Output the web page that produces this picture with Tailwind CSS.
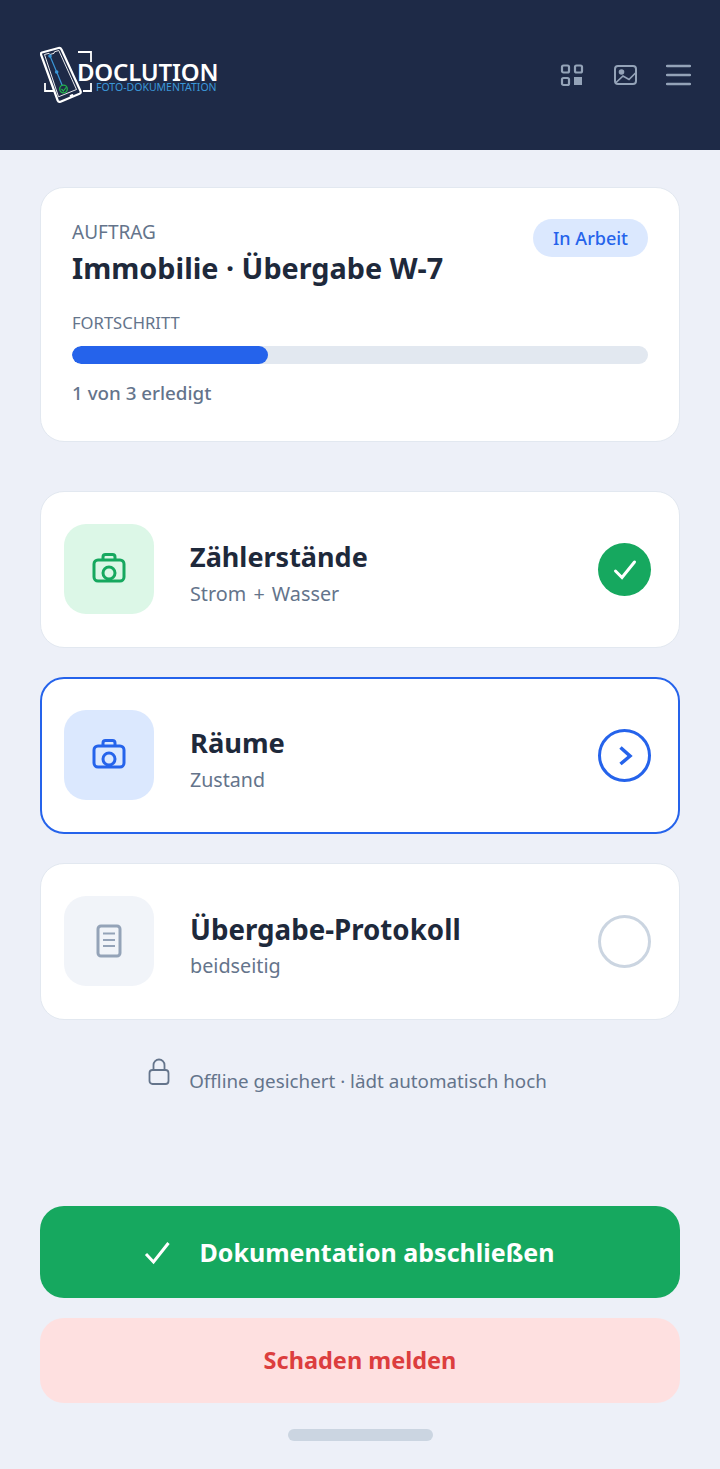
<!doctype html>
<html lang="de"><head><meta charset="utf-8"><script src="https://cdn.jsdelivr.net/npm/@tailwindcss/browser@4"></script></head>
<body class="m-0">
<div class="w-[720px] h-[1469px] overflow-hidden flex flex-col bg-[#edf0f8] font-['Noto_Sans',sans-serif]">
  <header class="h-[150px] shrink-0 bg-[#1e2a47] flex items-center justify-between pl-[40px] pr-[29px]">
    <div class="flex items-start relative w-[178px] h-[60px]">
      <svg width="60" height="62" viewBox="0 0 60 62" fill="none" class="absolute left-0 top-0">
        <path d="M38 7 H51 V17 M43 46 H51 V38 M5 38 V46 H17" stroke="#fff" stroke-width="1.800"/>
        <path d="M2 7.500 L18.500 3 Q20.500 2.500 21.500 4.500 L40.500 46 Q41.300 48 39.500 48.800 L20.500 56.700 Q18.500 57.400 17.700 55.500 L1 9.500 Q0.500 8 2 7.500 Z" fill="#1e2a47" stroke="#fff" stroke-width="2.200" stroke-linejoin="round"/>
        <path d="M4.500 9.500 L9 8.300 L10 9.500 L14 8.300 L14.500 6.800 L18.800 5.500 L36.500 44.500 L18.500 51.800 Z" stroke="#fff" stroke-width="0.900" stroke-linejoin="round"/>
        <path d="M10 11 L16.700 27 L23.300 43" stroke="#3b97d8" stroke-width="1.200"/>
        <circle cx="10" cy="11" r="1.800" fill="#3b97d8"/><circle cx="16.700" cy="27" r="1.800" fill="#3b97d8"/>
        <circle cx="23.500" cy="44" r="3.800" fill="#1e2a47" stroke="#22b14c" stroke-width="1.300"/>
        <path d="M21.500 44 L23.300 46 L26.500 42" stroke="#22b14c" stroke-width="1.200"/>
        <ellipse cx="31.500" cy="50.500" rx="2" ry="1.200" fill="#fff" transform="rotate(-22 31.500 50.500)"/>
      </svg>
      <div class="absolute left-[37px] top-[17px] text-white font-semibold text-[24px] leading-[20px] tracking-[-0.2px] whitespace-nowrap">DOCLUTION</div>
      <div class="absolute left-[56px] top-[37px] text-[#3b97d8] text-[10.500px] leading-[10px] whitespace-nowrap">FOTO-DOKUMENTATION</div>
    </div>
    <div class="flex items-center gap-[29px]">
      <svg width="24" height="24" viewBox="0 0 24 24" fill="none" stroke="#94a3b8" stroke-width="2.200"><rect x="2" y="2.500" width="7" height="7" rx="1.500"/><rect x="15" y="2.500" width="7" height="7" rx="1.500"/><rect x="2" y="15" width="7" height="7" rx="1.500"/><rect x="14" y="14" width="8" height="8" fill="#94a3b8" stroke="none"/></svg>
      <svg width="24" height="24" viewBox="0 0 24 24" fill="none" stroke="#94a3b8" stroke-width="2"><rect x="2" y="3" width="21" height="18" rx="3"/><circle cx="8.500" cy="9" r="2.800" fill="#94a3b8" stroke="none"/><path d="M2.500 20 L10 13 L16 16.500 L22.500 10" stroke-width="1.700"/></svg>
      <svg width="25" height="24" viewBox="0 0 25 24" fill="none" stroke="#94a3b8" stroke-width="2.500" stroke-linecap="round"><path d="M1 3h23M1 12h23M1 21h23"/></svg>
    </div>
  </header>

  <main class="flex-1 flex flex-col px-[40px] pt-[37px] pb-[27px]">
    <section class="relative h-[255px] bg-white rounded-[24px] border border-[#e2e8f0] px-[31px] pt-[31px]">
      <span class="absolute right-[31px] top-[31px] h-[38px] w-[115px] rounded-full bg-[#dbe8fe] text-[#2563eb] text-[18px] font-medium flex items-center justify-center">In Arbeit</span>
      <div class="text-[19px] leading-[26px] text-[#64748b]">AUFTRAG</div>
      <div class="text-[28.800px] leading-[36px] font-bold text-[#1e293b] mt-[5px]">Immobilie · Übergabe W-7</div>
      <div class="text-[16.600px] leading-[22px] text-[#64748b] mt-[26px]">FORTSCHRITT</div>
      <div class="h-[18px] rounded-full bg-[#e2e8f0] mt-[12px] overflow-hidden"><div class="h-full w-[34%] rounded-full bg-[#2563eb]"></div></div>
      <div class="text-[18.800px] leading-[26px] font-medium text-[#64748b] mt-[16px]">1 von 3 erledigt</div>
    </section>

    <div class="flex flex-col gap-[29px] mt-[49px]">
      <article class="h-[157px] bg-white rounded-[24px] border border-[#e2e8f0] flex items-center pl-[23px] pr-[28px]">
        <div class="w-[90px] h-[90px] mb-[2px] rounded-[22px] bg-[#dcf7e7] flex items-center justify-center">
          <svg width="36" height="36" viewBox="0 0 36 36" fill="none" stroke="#16a85f" stroke-width="3"><rect x="3" y="9" width="30" height="21" rx="4"/><path d="M12 9 V6 Q12 3.500 14.500 3.500 H21.500 Q24 3.500 24 6 V9"/><circle cx="18" cy="22" r="6"/></svg>
        </div>
        <div class="ml-[36px] flex-1 pt-[7px]">
          <div class="text-[27px] leading-[36px] font-bold text-[#1e293b]">Zählerstände</div>
          <div class="text-[19.800px] leading-[28px] text-[#64748b] mt-[5px] [word-spacing:2px]">Strom + Wasser</div>
        </div>
        <div class="w-[53px] h-[53px] rounded-full bg-[#16a85f] flex items-center justify-center">
          <svg width="26" height="26" viewBox="0 0 26 26" fill="none" stroke="#fff" stroke-width="3" stroke-linecap="round"><path d="M3.500 14 L10 20.500 L22.500 5"/></svg>
        </div>
      </article>

      <article class="h-[157px] bg-white rounded-[24px] border-2 border-[#2563eb] flex items-center pl-[22px] pr-[27px]">
        <div class="w-[90px] h-[90px] mb-[2px] rounded-[22px] bg-[#dbe8fe] flex items-center justify-center">
          <svg width="36" height="36" viewBox="0 0 36 36" fill="none" stroke="#2563eb" stroke-width="3"><rect x="3" y="9" width="30" height="21" rx="4"/><path d="M12 9 V6 Q12 3.500 14.500 3.500 H21.500 Q24 3.500 24 6 V9"/><circle cx="18" cy="22" r="6"/></svg>
        </div>
        <div class="ml-[36px] flex-1 pt-[7px]">
          <div class="text-[27.300px] leading-[36px] font-bold text-[#1e293b]">Räume</div>
          <div class="text-[19.600px] leading-[28px] text-[#64748b] mt-[5px]">Zustand</div>
        </div>
        <div class="w-[53px] h-[53px] rounded-full border-[3px] border-[#2563eb] flex items-center justify-center">
          <svg width="20" height="20" viewBox="0 0 20 20" fill="none" stroke="#2563eb" stroke-width="3.500"><path d="M5.500 1.500 L15 10 L5.500 18"/></svg>
        </div>
      </article>

      <article class="h-[157px] bg-white rounded-[24px] border border-[#e2e8f0] flex items-center pl-[23px] pr-[28px]">
        <div class="w-[90px] h-[90px] mb-[2px] rounded-[22px] bg-[#f1f4f9] flex items-center justify-center">
          <svg width="36" height="36" viewBox="0 0 36 36" fill="none" stroke="#94a3b8" stroke-width="3"><rect x="7" y="3" width="22" height="30" rx="3"/><path d="M12 10.500 H24 M12 17 H24 M12 23 H24" stroke-width="2"/></svg>
        </div>
        <div class="ml-[36px] flex-1 pt-[7px]">
          <div class="text-[27.700px] leading-[36px] font-bold text-[#1e293b]">Übergabe-Protokoll</div>
          <div class="text-[19.800px] leading-[28px] text-[#64748b] mt-[5px]">beidseitig</div>
        </div>
        <div class="w-[53px] h-[53px] rounded-full border-[3px] border-[#cbd5e1]"></div>
      </article>
    </div>

    <div class="flex items-start justify-center mt-[37px] gap-[18px] h-[40px] pr-[26px]">
      <svg width="24" height="30" viewBox="0 0 24 30" fill="none" stroke="#64748b" stroke-width="1.800"><rect x="2.500" y="13" width="19" height="14" rx="3"/><path d="M6.500 13 V8 A5.500 5.500 0 0 1 17.500 8 V13"/></svg>
      <div class="text-[18.800px] leading-[28px] text-[#64748b] mt-[10px]">Offline gesichert · lädt automatisch hoch</div>
    </div>

    <button class="mt-auto h-[92px] rounded-[24px] bg-[#16a85f] text-white text-[25px] font-bold flex items-center justify-center gap-[29px] w-full pr-[23px] pt-[1px]">
      <svg width="28" height="28" viewBox="0 0 28 28" fill="none" stroke="#fff" stroke-width="3"><path d="M3 15 L10.500 23 L25.500 4"/></svg>
      <span>Dokumentation abschließen</span>
    </button>
    <button class="mt-[20px] h-[85px] rounded-[24px] bg-[#fee0e0] text-[#dc3e3e] text-[23.500px] font-bold flex items-center justify-center w-full">Schaden melden</button>
    <div class="mt-[26px] mb-[1px] mx-auto w-[145px] h-[12px] rounded-full bg-[#cbd5e1]"></div>
  </main>
</div>
</body></html>
